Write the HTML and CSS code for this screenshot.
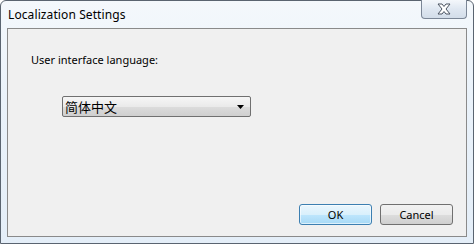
FILE: index.html
```html
<!DOCTYPE html>
<html>
<head>
<meta charset="utf-8">
<link rel="stylesheet" href="styles.css">
</head>
<body>
<div class="window">
  <div class="titlebar">
    <span class="title">Localization Settings</span>
    <div class="close">
      <svg width="16" height="12" viewBox="0 0 16 12"><path d="M2 1 L6 1 L8 3.5 L10 1 L14 1 L10 6 L14 11 L10 11 L8 8.5 L6 11 L2 11 L6 6 Z" fill="#fff" stroke="#4a5360" stroke-width="1" stroke-linejoin="round"/></svg>
    </div>
  </div>
  <div class="client">
    <div class="label">User interface language:</div>
    <div class="combo">
      <span class="combo-text">简体中文</span>
      <svg class="arrow" width="7" height="4" viewBox="0 0 7 4"><path d="M0 0 H7 L3.5 4 Z" fill="#000"/></svg>
    </div>
    <div class="buttons">
      <div class="btn default">OK</div>
      <div class="btn">Cancel</div>
    </div>
  </div>
</div>
</body>
</html>
```

FILE: styles.css
```css
html, body {
  margin: 0;
  padding: 0;
  width: 474px;
  height: 244px;
  overflow: hidden;
  background: #ffffff;
}
.window {
  box-sizing: border-box;
  width: 474px;
  height: 244px;
  border: 1px solid #5a6470;
  border-radius: 6px 6px 0 0;
  background: linear-gradient(180deg, #f4f8fc 0%, #eaf2fa 40%, #e4eef8 100%);
  display: flex;
  flex-direction: column;
  font-family: "Noto Sans", "Liberation Sans", sans-serif;
}
.titlebar {
  height: 27px;
  display: flex;
  align-items: flex-start;
  justify-content: space-between;
  padding-left: 7px;
  padding-right: 6px;
}
.title {
  font-size: 12px;
  color: #000;
  margin-top: 5px;
  letter-spacing: 0.1px;
}
.close {
  box-sizing: border-box;
  width: 46px;
  height: 19px;
  margin-top: -1px;
  border: 1px solid #7b8696;
  border-top: none;
  border-radius: 0 0 4px 4px;
  background: linear-gradient(180deg, #f4f7fb 0%, #dfe7f1 50%, #d3dde9 100%);
  display: flex;
  align-items: center;
  justify-content: center;
}
.client {
  flex: 1;
  margin: 0 6px 6px 6px;
  border: 1px solid #8a8a8a;
  background: #f0f0f0;
  position: relative;
  display: flex;
  flex-direction: column;
}
.label {
  font-size: 11px;
  color: #000;
  margin: 23px 0 0 23px;
}
.combo {
  box-sizing: border-box;
  width: 189px;
  height: 21px;
  margin: 29px 0 0 54px;
  border: 1px solid #707070;
  border-radius: 2px;
  background: linear-gradient(180deg, #f6f6f6 0%, #eaeaea 50%, #dcdcdc 51%, #cfcfcf 100%);
  display: flex;
  align-items: center;
  justify-content: space-between;
  padding: 0 6px 0 2px;
}
.combo-text {
  font-family: "Noto Sans CJK SC", sans-serif;
  font-size: 13px;
  color: #000;
  line-height: 1;
}
.buttons {
  margin-top: auto;
  margin-bottom: 11px;
  display: flex;
  justify-content: flex-end;
  gap: 8px;
  padding-right: 13px;
}
.btn {
  box-sizing: border-box;
  width: 73px;
  height: 21px;
  border: 1px solid #707070;
  border-radius: 3px;
  background: linear-gradient(180deg, #f2f2f2 0%, #ebebeb 50%, #dddddd 51%, #cfcfcf 100%);
  font-size: 11px;
  display: flex;
  align-items: center;
  justify-content: center;
  color: #000;
}
.btn.default {
  border-color: #3c7fb1;
  background: linear-gradient(180deg, #eaf6fd 0%, #d9f0fc 50%, #bee6fd 51%, #a7d9f5 100%);
  box-shadow: inset 0 0 0 1px rgba(255,255,255,0.6);
}
```
